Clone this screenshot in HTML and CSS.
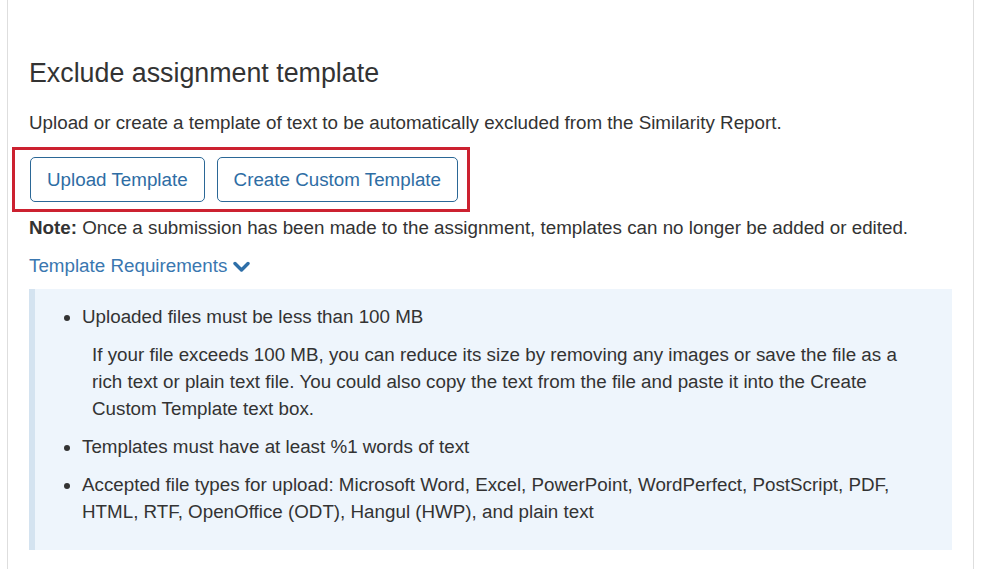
FILE: index.html
```html
<!DOCTYPE html>
<html lang="en">
<head>
  <meta charset="UTF-8">
  <title>Exclude assignment template</title>
  <link rel="stylesheet" href="styles.css">
</head>
<body>

<!-- === Template Settings === -->
<div class="page">
  <h3>Exclude assignment template</h3>
  <p class="intro">Upload or create a template of text to be automatically excluded from the Similarity Report.</p>

  <div class="actions">
    <button class="btn">Upload Template</button>
    <button class="btn">Create Custom Template</button>
    <span class="highlight"></span>
  </div>

  <p class="note"><strong>Note:</strong> Once a submission has been made to the assignment, templates can no longer be added or edited.</p>

  <a class="toggle" href="#req">Template Requirements
    <svg width="17" height="12" viewBox="0 0 17 12"><path d="M2 2.5 L8.5 9 L15 2.5" fill="none" stroke="#2e6fa8" stroke-width="3.4" stroke-linecap="round" stroke-linejoin="round"/></svg>
  </a>

  <div class="panel" id="req">
    <ul>
      <li>Uploaded files must be less than 100 MB
        <p>If your file exceeds 100 MB, you can reduce its size by removing any images or save the file as a rich text or plain text file. You could also copy the text from the file and paste it into the Create Custom Template text box.</p>
      </li>
      <li>Templates must have at least %1 words of text</li>
      <li>Accepted file types for upload: Microsoft Word, Excel, PowerPoint, WordPerfect, PostScript, PDF, HTML, RTF, OpenOffice (ODT), Hangul (HWP), and plain text</li>
    </ul>
  </div>
</div>

</body>
</html>
```

FILE: styles.css
```css
/* ===== Global Styles ===== */
* {
  margin: 0;
  padding: 0;
  box-sizing: border-box;
}
body {
  font-family: "Liberation Sans", Arial, sans-serif;
  font-size: 18.8px;
  line-height: 27px;
  color: #333;
  background: #fff;
}
.page {
  margin-left: 7px;
  width: 967px;
  min-height: 569px;
  border-left: 1px solid #dedede;
  border-right: 1px solid #dedede;
  padding: 58px 21px 20px 21px;
}
h3 {
  font-size: 26.8px;
  font-weight: normal;
  line-height: 30px;
  color: #333;
}
.intro {
  margin-top: 21px;
}

/* ===== Buttons ===== */
.actions {
  position: relative;
  display: flex;
  gap: 12px;
  margin-top: 21px;
  margin-left: 1px;
  width: max-content;
}
.btn {
  font-family: inherit;
  font-size: 18.8px;
  height: 45px;
  padding: 0 16px;
  background: #fff;
  color: #2e6da4;
  border: 1px solid #2b6796;
  border-radius: 5px;
  cursor: pointer;
}
.highlight {
  position: absolute;
  top: -10px;
  left: -18px;
  right: -12px;
  bottom: -10px;
  border: 3px solid #cc2130;
  pointer-events: none;
}

.note {
  margin-top: 12px;
}
.toggle {
  display: inline-flex;
  align-items: center;
  gap: 6px;
  margin-top: 11px;
  color: #3a77b0;
  text-decoration: none;
}
.toggle svg {
  margin-top: 2px;
}

/* ===== Requirements Panel ===== */
.panel {
  margin-top: 10px;
  background: #eef5fc;
  border-left: 6px solid #d4e3f0;
  padding: 14px 20px 25px 0;
}
.panel ul {
  padding-left: 47px;
}
.panel li {
  margin-bottom: 11px;
}
.panel li:last-child {
  margin-bottom: 0;
}
.panel li p {
  margin-top: 11px;
  margin-left: 10px;
}
```
